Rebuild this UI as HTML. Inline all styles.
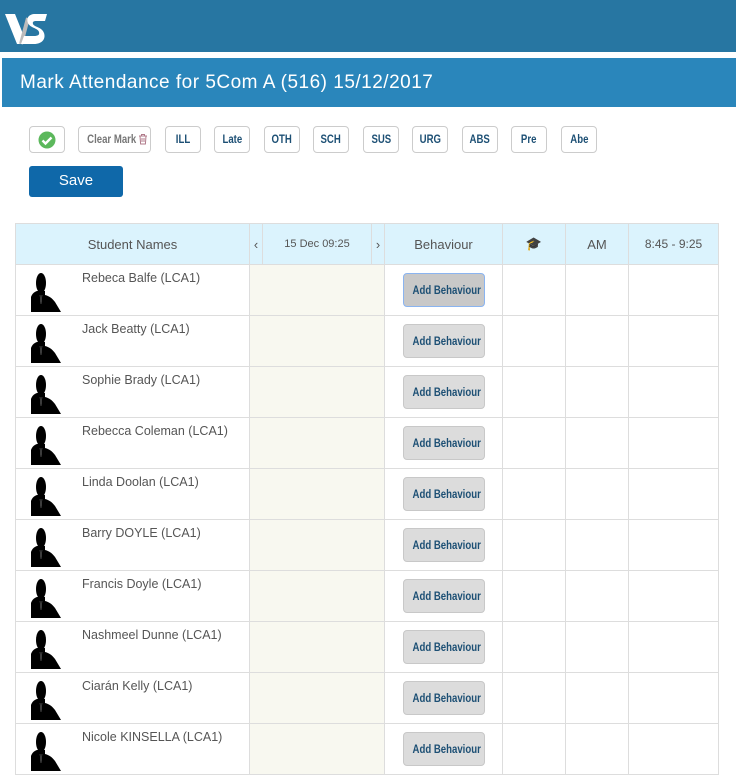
<!DOCTYPE html>
<html><head><style>
*{box-sizing:border-box;margin:0;padding:0}
body{width:736px;height:744px;overflow:hidden;background:#fff;font-family:"Liberation Sans",sans-serif;position:relative}
.top{position:absolute;left:0;top:0;width:736px;height:52px;background:#2776a2}
.title{position:absolute;left:2px;top:58px;width:734px;height:49px;background:#2a86bb;color:#fff;font-size:19px;line-height:49px;padding-left:18px;letter-spacing:0.5px}
.btn{position:absolute;top:126px;height:27px;border:1px solid #ccc;border-radius:4px;background:#fff;color:#1c4f74;font-weight:bold;font-size:12px;line-height:25px;text-align:center;white-space:nowrap}
.btn i,.ab i{font-style:normal;display:inline-block;transform:scaleX(0.8)}
.save{position:absolute;left:29px;top:166px;width:94px;height:31px;background:#0f68a9;color:#fff;border-radius:3px;text-align:center;line-height:30px;font-size:15px}
table{position:absolute;left:15px;top:223px;border-collapse:collapse;width:704px}
td,th{border:1px solid #ddd;height:51px;padding:0}
th{background:#dbf3fd;height:41px;font-weight:normal;color:#555;font-size:13px}
.nm{position:relative}
.nm span{position:absolute;left:66px;top:6px;font-size:12.5px;color:#555}
.nm svg{position:absolute;left:12px;top:8px}
.dt{background:#f8f8f0}
.ab{display:block;margin:0 auto;width:82px;height:34px;background:#dcdcdc;border:1px solid #c8c8c8;border-radius:4px;color:#1c4f74;font-weight:bold;font-size:12px;line-height:32px;text-align:center;white-space:nowrap}
</style></head><body>
<div class="top">
<svg width="46" height="34" viewBox="0 0 46 34" style="position:absolute;left:5px;top:12px">
<path d="M0 2h10l8 20 4-10-4 20h-6z" fill="#fff"/>
<path d="M16 32l7-26" stroke="#bbb" stroke-width="4"/>
<path d="M42 2H30c-6 0-9 4-7 9s10 5 11 9c1 4-3 4-6 4h-9l-3 8h13c8 0 12-5 10-11s-10-6-11-9c-1-3 2-3 4-3h8z" fill="#fff"/>
</svg>
</div>
<div class="title">Mark Attendance for 5Com A (516) 15/12/2017</div>
<div class="btn" style="left:29px;width:36px"><svg width="18" height="18" viewBox="0 0 18 18" style="margin-top:4px"><circle cx="9" cy="9" r="8.5" fill="#5cb85c"/><path d="M4.5 9.5l3 3 6-6" stroke="#fff" stroke-width="2.4" fill="none"/></svg></div>
<div class="btn" style="left:78px;width:73px;color:#777"><i>Clear Mark</i><svg width="10" height="12" viewBox="0 0 10 12" style="vertical-align:-2px;margin-left:-4px"><path d="M1 3h8M3.5 3V1.5h3V3M2 3l.6 8h4.8L8 3M4 5v4M6 5v4" stroke="#b07a8a" stroke-width="1" fill="none"/></svg></div>
<div class="btn" style="left:165px;width:36px"><i>ILL</i></div>
<div class="btn" style="left:214px;width:36px"><i>Late</i></div>
<div class="btn" style="left:264px;width:36px"><i>OTH</i></div>
<div class="btn" style="left:313px;width:36px"><i>SCH</i></div>
<div class="btn" style="left:363px;width:36px"><i>SUS</i></div>
<div class="btn" style="left:412px;width:36px"><i>URG</i></div>
<div class="btn" style="left:462px;width:36px"><i>ABS</i></div>
<div class="btn" style="left:511px;width:36px"><i>Pre</i></div>
<div class="btn" style="left:561px;width:36px"><i>Abe</i></div>
<div class="save">Save</div>
<table>
<tr><th style="width:234px">Student Names</th><th style="width:13px">&#8249;</th><th style="width:109px;font-size:11px">15 Dec 09:25</th><th style="width:13px">&#8250;</th><th style="width:118px">Behaviour</th><th style="width:63px;color:#999">&#127891;</th><th style="width:63px">AM</th><th style="font-size:12px">8:45 - 9:25</th></tr>
</table>
<script>
var n=["Rebeca Balfe (LCA1)","Jack Beatty (LCA1)","Sophie Brady (LCA1)","Rebecca Coleman (LCA1)","Linda Doolan (LCA1)","Barry DOYLE (LCA1)","Francis Doyle (LCA1)","Nashmeel Dunne (LCA1)","Ciarán Kelly (LCA1)","Nicole KINSELLA (LCA1)"];
var av='<svg width="36" height="39" viewBox="0 0 36 39"><ellipse cx="13" cy="10" rx="5" ry="10" fill="#000"/><path d="M9 18h8v4c4 1 7 3 10 7l6 10H3v-15c1-3 3-5 6-6z" fill="#000"/><path d="M12 22l1 9 1-9" stroke="#666" stroke-width="0.6" fill="none"/></svg>';
var h='';n.forEach(function(s,i){h+='<tr><td class="nm">'+av+'<span>'+s+'</span></td><td class="dt" colspan="3"></td><td><div class="ab"'+(i==0?' style="background:#c8c8c8;border-color:#8ab4f0"':'')+'><i>Add Behaviour</i></div></td><td></td><td></td><td></td></tr>'});
document.querySelector('table tbody').insertAdjacentHTML('beforeend',h);
</script>
</body></html>
